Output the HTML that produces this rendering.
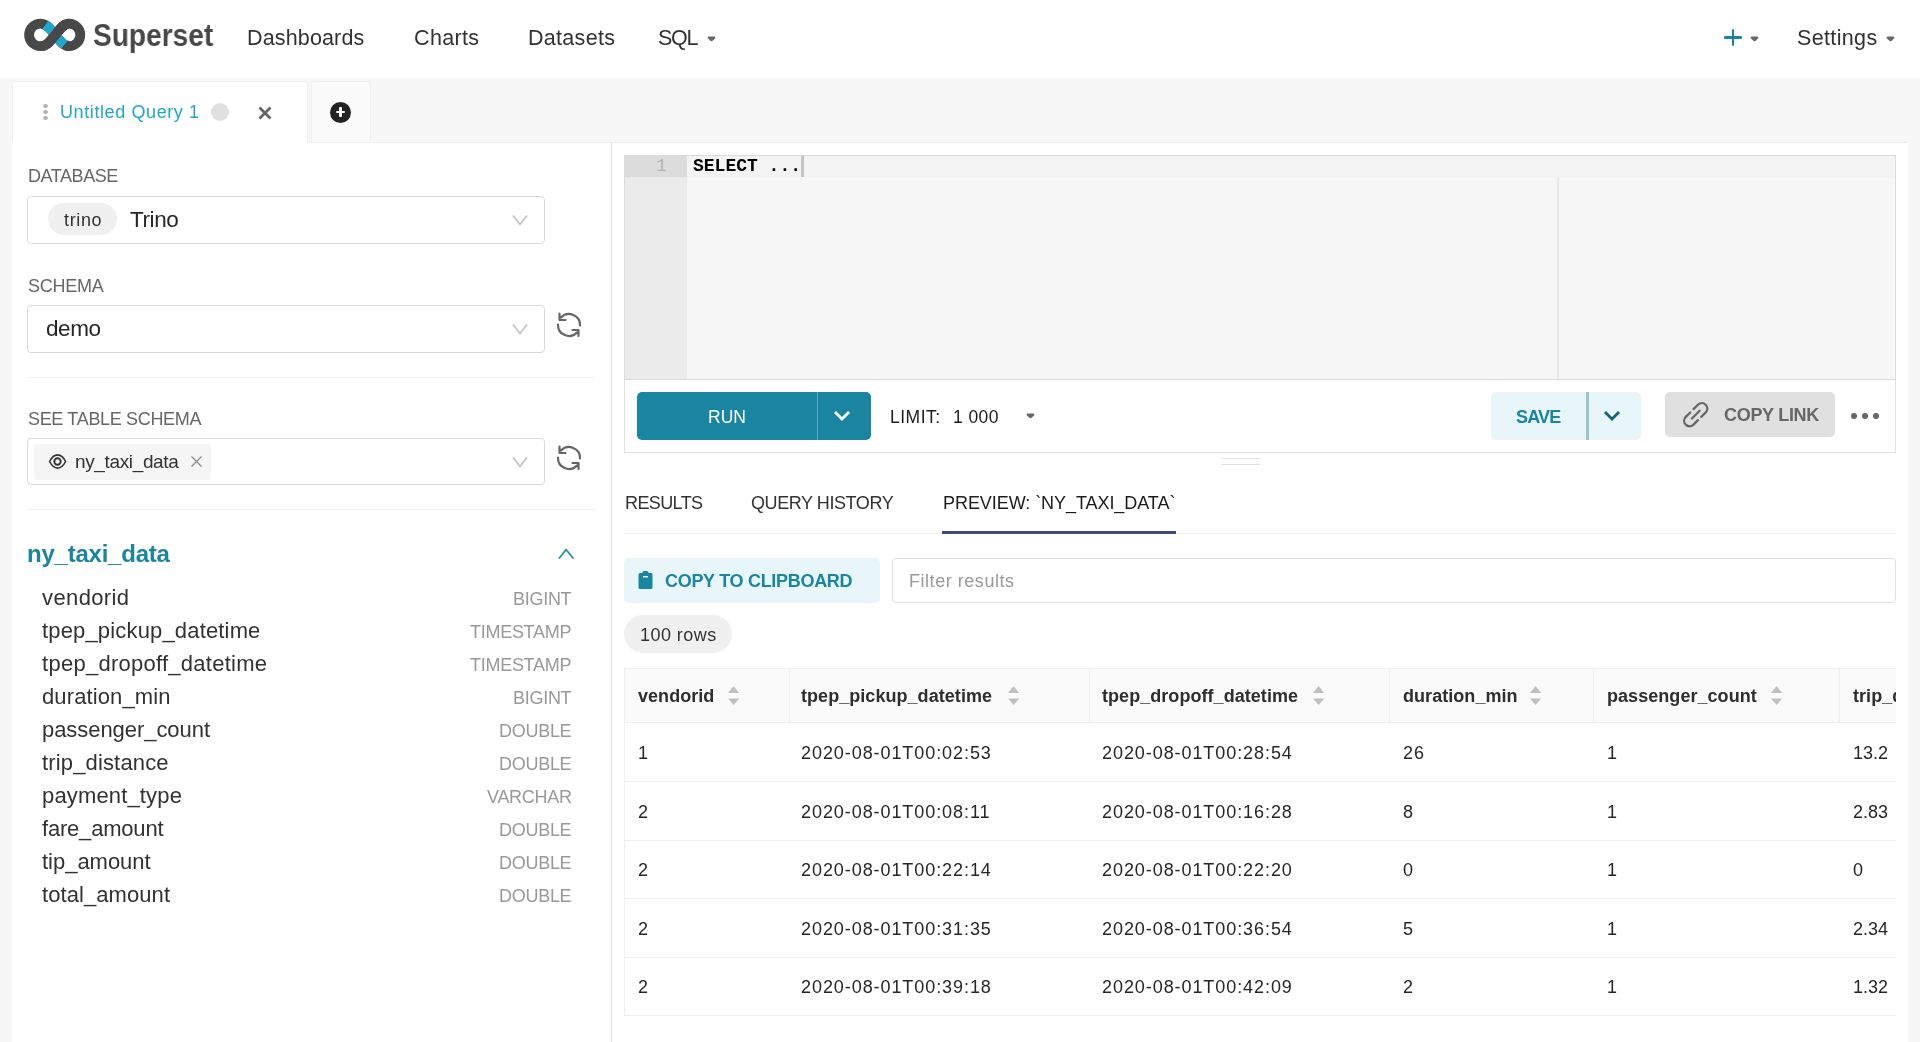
<!DOCTYPE html>
<html><head><meta charset="utf-8">
<style>
*{box-sizing:border-box;margin:0;padding:0}
html,body{width:1920px;height:1042px;overflow:hidden}
body{position:relative;background:#f7f7f7;font-family:"Liberation Sans",sans-serif;color:#323232}
.a{position:absolute}
.t{position:absolute;white-space:pre;line-height:1;will-change:transform}
svg{position:absolute;overflow:visible}
</style></head><body>

<!-- HEADER -->
<div class="a" style="left:0;top:0;width:1920px;height:78px;background:#fff"></div>
<svg style="left:0;top:0" width="220" height="78" viewBox="0 0 220 78">
  <defs><clipPath id="bc"><polygon points="48.5,19.9 69.3,39.5 60.9,49.6 40.8,30"/></clipPath></defs>
  <path d="M55.2,35 C50.2,41 47,46.2 40.4,46.2 A11.3 11.3 0 0 1 40.4 23.6 C47,23.6 50.2,29 55.2,35 C60.2,41 63.4,46.2 69,46.2 A11.3 11.3 0 0 0 69 23.6 C63.4,23.6 60.2,29 55.2,35" fill="none" stroke="#484848" stroke-width="9.8"/>
  <path d="M40.4,23.6 C47,23.6 50.2,29 55.2,35 C60.2,41 63.4,46.2 69,46.2" fill="none" stroke="#20a7c9" stroke-width="9.8" clip-path="url(#bc)"/>
  <path d="M40.4,46.2 C47,46.2 50.2,41 55.2,35 C60.2,29 63.4,23.6 69,23.6" fill="none" stroke="#484848" stroke-width="9.8"/>
  <path d="M41.6,29.1 L47.1,22 M62.6,47.6 L68.3,40.7" stroke="#3d3535" stroke-width="0.8"/>
</svg>
<div class="t" style="left:93px;top:20px;font-size:31px;font-weight:700;color:#484848;transform:scaleX(0.907);transform-origin:0 0">Superset</div>
<div class="t" style="left:247px;top:28px;font-size:21.5px;letter-spacing:0.15px;color:#323232">Dashboards</div>
<div class="t" style="left:414px;top:28px;font-size:21.5px;letter-spacing:0.35px;color:#323232">Charts</div>
<div class="t" style="left:528px;top:28px;font-size:21.5px;letter-spacing:0.3px;color:#323232">Datasets</div>
<div class="t" style="left:658px;top:28px;font-size:21.5px;letter-spacing:-1.3px;color:#323232">SQL</div>
<svg style="left:706.5px;top:35.5px" width="9" height="7" viewBox="0 0 9 7"><path d="M1.8 0.6 H7.2 Q8 0.6 8.5 2 L5.3 5 Q4.5 5.7 3.7 5 L0.5 2 Q1 0.6 1.8 0.6 Z" fill="#666"/></svg>
<!-- plus -->
<div class="a" style="left:1724px;top:36.2px;width:17.5px;height:2.5px;background:#1a85a0;border-radius:1.2px"></div>
<div class="a" style="left:1731.5px;top:29px;width:2.5px;height:17px;background:#1a85a0;border-radius:1.2px"></div>
<svg style="left:1749.5px;top:35.5px" width="9" height="7" viewBox="0 0 9 7"><path d="M1.8 0.6 H7.2 Q8 0.6 8.5 2 L5.3 5 Q4.5 5.7 3.7 5 L0.5 2 Q1 0.6 1.8 0.6 Z" fill="#666"/></svg>
<div class="t" style="left:1797px;top:28px;font-size:21.5px;letter-spacing:0.35px;color:#323232">Settings</div>
<svg style="left:1885.5px;top:35.5px" width="9" height="7" viewBox="0 0 9 7"><path d="M1.8 0.6 H7.2 Q8 0.6 8.5 2 L5.3 5 Q4.5 5.7 3.7 5 L0.5 2 Q1 0.6 1.8 0.6 Z" fill="#666"/></svg>

<!-- TAB BAR -->
<div class="a" style="left:12px;top:142px;width:1896px;height:1px;background:#f0f0f0"></div>
<div class="a" style="left:12px;top:81px;width:296px;height:62px;background:#fff;border:1px solid #f0f0f0;border-bottom:none;border-radius:3px 3px 0 0"></div>
<div class="a" style="left:311px;top:81px;width:60px;height:61px;background:#fafafa;border:1px solid #f0f0f0;border-bottom:none;border-radius:3px 3px 0 0"></div>
<div class="a" style="left:43px;top:104px;width:5px;height:4px;border-radius:50%;background:#b2b2b2"></div>
<div class="a" style="left:43px;top:110px;width:5px;height:4px;border-radius:50%;background:#b2b2b2"></div>
<div class="a" style="left:43px;top:116px;width:5px;height:4px;border-radius:50%;background:#b2b2b2"></div>
<div class="t" style="left:59.5px;top:103px;font-size:18px;letter-spacing:0.6px;color:#20a7c9">Untitled Query 1</div>
<div class="a" style="left:211px;top:103px;width:18px;height:18px;border-radius:50%;background:#e0e0e0"></div>
<svg style="left:258px;top:105.5px" width="14" height="14" viewBox="0 0 14 14"><path d="M1.5 1.5 L12.5 12.5 M12.5 1.5 L1.5 12.5" stroke="#666" stroke-width="2.8" stroke-linecap="butt"/></svg>
<div class="a" style="left:329.9px;top:101.5px;width:21.2px;height:21.2px;border-radius:50%;background:#222"></div>
<div class="a" style="left:335.8px;top:111px;width:9.4px;height:2.2px;background:#fff;border-radius:1px"></div>
<div class="a" style="left:339.4px;top:107.4px;width:2.2px;height:9.4px;background:#fff;border-radius:1px"></div>

<!-- PANELS -->
<div class="a" style="left:12px;top:143px;width:1896px;height:899px;background:#fff"></div>
<div class="a" style="left:611px;top:143px;width:1px;height:899px;background:#e0e0e0"></div>

<!-- LEFT PANEL -->
<div class="t" style="left:27.5px;top:167px;font-size:18px;letter-spacing:-0.43px;color:#666">DATABASE</div>
<div class="a" style="left:27px;top:196px;width:518px;height:48px;border:1px solid #d9d9d9;border-radius:4px"></div>
<div class="a" style="left:48px;top:203px;width:69px;height:32px;border-radius:16px;background:#f0f0f0"></div>
<div class="t" style="left:63.5px;top:211px;font-size:18px;letter-spacing:0.65px;color:#323232">trino</div>
<div class="t" style="left:130px;top:209px;font-size:22.5px;letter-spacing:-0.4px;color:#262626">Trino</div>
<svg style="left:512px;top:214px" width="16" height="12" viewBox="0 0 16 12"><path d="M1 1.5 L8 10.5 L15 1.5" fill="none" stroke="#bfbfbf" stroke-width="1.5"/></svg>

<div class="t" style="left:27.5px;top:277px;font-size:18px;letter-spacing:-0.25px;color:#666">SCHEMA</div>
<div class="a" style="left:27px;top:305px;width:518px;height:48px;border:1px solid #d9d9d9;border-radius:4px"></div>
<div class="t" style="left:45.5px;top:317.5px;font-size:22.5px;letter-spacing:-0.4px;color:#262626">demo</div>
<svg style="left:512px;top:323px" width="16" height="12" viewBox="0 0 16 12"><path d="M1 1.5 L8 10.5 L15 1.5" fill="none" stroke="#bfbfbf" stroke-width="1.5"/></svg>
<svg style="left:0;top:0" width="1" height="1" viewBox="0 0 1 1"></svg>
<svg style="left:550px;top:305px" width="40" height="40" viewBox="550 305 40 40"><path d="M580 325.5 A11 11 0 0 0 561 317.5 M559.5 313.5 V320 H565.5 M558 324.5 A11 11 0 0 0 577 332.5 M572.5 330 H578.5 V336" fill="none" stroke="#666" stroke-width="2.2" stroke-linecap="round" stroke-linejoin="round"/></svg>

<div class="a" style="left:27px;top:377px;width:568px;height:1px;background:#f0f0f0"></div>

<div class="t" style="left:27.5px;top:410px;font-size:18px;letter-spacing:-0.33px;color:#666">SEE TABLE SCHEMA</div>
<div class="a" style="left:27px;top:438px;width:518px;height:47px;border:1px solid #d9d9d9;border-radius:4px"></div>
<div class="a" style="left:34px;top:444px;width:177px;height:36px;border-radius:3px;background:#f5f5f5"></div>
<svg style="left:48px;top:453px" width="20" height="17" viewBox="0 0 20 17"><path d="M1.6 8.5 C4 3.8 6.8 1.9 9.6 1.9 C12.4 1.9 15.2 3.8 17.6 8.5 C15.2 13.2 12.4 15.1 9.6 15.1 C6.8 15.1 4 13.2 1.6 8.5 Z" fill="none" stroke="#323232" stroke-width="1.6" stroke-linejoin="round"/><circle cx="9.5" cy="8.5" r="3.2" fill="none" stroke="#323232" stroke-width="1.9"/></svg>
<div class="t" style="left:74.5px;top:452px;font-size:19px;letter-spacing:-0.36px;color:#323232">ny_taxi_data</div>
<svg style="left:190px;top:455px" width="13" height="13" viewBox="0 0 13 13"><path d="M1.5 1.5 L11.5 11.5 M11.5 1.5 L1.5 11.5" stroke="#8c8c8c" stroke-width="1.3"/></svg>
<svg style="left:512px;top:456px" width="16" height="12" viewBox="0 0 16 12"><path d="M1 1.5 L8 10.5 L15 1.5" fill="none" stroke="#bfbfbf" stroke-width="1.5"/></svg>
<svg style="left:550px;top:438px" width="40" height="40" viewBox="550 305 40 40"><path d="M580 325.5 A11 11 0 0 0 561 317.5 M559.5 313.5 V320 H565.5 M558 324.5 A11 11 0 0 0 577 332.5 M572.5 330 H578.5 V336" fill="none" stroke="#666" stroke-width="2.2" stroke-linecap="round" stroke-linejoin="round"/></svg>

<div class="a" style="left:27px;top:509px;width:568px;height:1px;background:#f0f0f0"></div>

<div class="t" style="left:27px;top:542px;font-size:24px;font-weight:700;letter-spacing:-0.23px;color:#1a85a0">ny_taxi_data</div>
<svg style="left:557px;top:546px" width="18" height="14" viewBox="0 0 18 14"><path d="M2.4 12 L9.1 3.6 L16 12" fill="none" stroke="#2a8ea8" stroke-width="1.7" stroke-linecap="round" stroke-linejoin="round"/></svg>

<div class="t" style="left:42px;top:587px;font-size:22px;letter-spacing:0.386px;color:#323232">vendorid</div>
<div class="t" style="right:1348.5px;top:590px;font-size:18px;letter-spacing:-0.28px;color:#999">BIGINT</div>
<div class="t" style="left:42px;top:620px;font-size:22px;letter-spacing:0.163px;color:#323232">tpep_pickup_datetime</div>
<div class="t" style="right:1348.5px;top:623px;font-size:18px;letter-spacing:-0.28px;color:#999">TIMESTAMP</div>
<div class="t" style="left:42px;top:653px;font-size:22px;letter-spacing:0.265px;color:#323232">tpep_dropoff_datetime</div>
<div class="t" style="right:1348.5px;top:656px;font-size:18px;letter-spacing:-0.28px;color:#999">TIMESTAMP</div>
<div class="t" style="left:42px;top:686px;font-size:22px;letter-spacing:0.118px;color:#323232">duration_min</div>
<div class="t" style="right:1348.5px;top:689px;font-size:18px;letter-spacing:-0.28px;color:#999">BIGINT</div>
<div class="t" style="left:42px;top:719px;font-size:22px;letter-spacing:-0.057px;color:#323232">passenger_count</div>
<div class="t" style="right:1348.5px;top:722px;font-size:18px;letter-spacing:-0.28px;color:#999">DOUBLE</div>
<div class="t" style="left:42px;top:752px;font-size:22px;letter-spacing:0.15px;color:#323232">trip_distance</div>
<div class="t" style="right:1348.5px;top:755px;font-size:18px;letter-spacing:-0.28px;color:#999">DOUBLE</div>
<div class="t" style="left:42px;top:785px;font-size:22px;letter-spacing:0.155px;color:#323232">payment_type</div>
<div class="t" style="right:1348.5px;top:788px;font-size:18px;letter-spacing:-0.28px;color:#999">VARCHAR</div>
<div class="t" style="left:42px;top:818px;font-size:22px;letter-spacing:-0.2px;color:#323232">fare_amount</div>
<div class="t" style="right:1348.5px;top:821px;font-size:18px;letter-spacing:-0.28px;color:#999">DOUBLE</div>
<div class="t" style="left:42px;top:851px;font-size:22px;letter-spacing:-0.022px;color:#323232">tip_amount</div>
<div class="t" style="right:1348.5px;top:854px;font-size:18px;letter-spacing:-0.28px;color:#999">DOUBLE</div>
<div class="t" style="left:42px;top:884px;font-size:22px;letter-spacing:0.073px;color:#323232">total_amount</div>
<div class="t" style="right:1348.5px;top:887px;font-size:18px;letter-spacing:-0.28px;color:#999">DOUBLE</div>

<!-- RIGHT: EDITOR -->
<div class="a" style="left:624px;top:155px;width:1272px;height:225px;background:#f6f6f6;border:1px solid #dcdcdc;border-bottom:1px solid #dcdcdc"></div>
<div class="a" style="left:625px;top:156px;width:62px;height:223px;background:#ebebeb"></div>
<div class="a" style="left:625px;top:156px;width:62px;height:21px;background:#dcdcdc"></div>
<div class="a" style="left:687px;top:156px;width:1207px;height:21px;background:#f3f3f3"></div>
<div class="a" style="left:1557px;top:177px;width:2px;height:202px;background:#e8e8e8"></div>
<div class="t" style="left:656px;top:157px;font-family:'Liberation Mono',monospace;font-size:18px;color:#b2b2b2">1</div>
<div class="t" style="left:693px;top:157px;font-family:'Liberation Mono',monospace;font-size:18px;font-weight:700;color:#000">SELECT ...</div>
<div class="a" style="left:801px;top:156px;width:2.5px;height:21px;background:#c4c4c4"></div>

<!-- TOOLBAR -->
<div class="a" style="left:624px;top:380px;width:1272px;height:73px;border:1px solid #e0e0e0;border-top:none"></div>
<div class="a" style="left:637px;top:392px;width:234px;height:48px;background:#1a85a0;border-radius:5px"></div>
<div class="a" style="left:817px;top:392px;width:1px;height:48px;background:#5aa7bb"></div>
<div class="t" style="left:707.5px;top:409px;font-size:17.5px;color:#fff">RUN</div>
<svg style="left:833px;top:410px" width="18" height="12" viewBox="0 0 18 12"><path d="M2 2 L9 9 L16 2" fill="none" stroke="#fff" stroke-width="2.8"/></svg>
<div class="t" style="left:889.5px;top:409px;font-size:17.5px;letter-spacing:0.5px;color:#1b1b1b">LIMIT:</div>
<div class="t" style="left:952.5px;top:409px;font-size:17.5px;letter-spacing:0.4px;color:#1b1b1b">1 000</div>
<svg style="left:1026px;top:412.8px" width="9" height="7" viewBox="0 0 9 7"><path d="M1.8 0.6 H7.2 Q8 0.6 8.5 2 L5.3 5 Q4.5 5.7 3.7 5 L0.5 2 Q1 0.6 1.8 0.6 Z" fill="#666"/></svg>

<div class="a" style="left:1491px;top:392px;width:150px;height:48px;background:#e9f6f9;border-radius:5px"></div>
<div class="a" style="left:1586px;top:392px;width:3px;height:48px;background:#9cc2ca"></div>
<div class="t" style="left:1516px;top:408px;font-size:18px;font-weight:700;letter-spacing:-0.8px;color:#1a85a0">SAVE</div>
<svg style="left:1603px;top:410px" width="18" height="12" viewBox="0 0 18 12"><path d="M2 2 L9 9 L16 2" fill="none" stroke="#156378" stroke-width="2.8"/></svg>

<div class="a" style="left:1665px;top:392px;width:170px;height:45px;background:#e0e0e0;border-radius:5px"></div>
<svg style="left:1678px;top:398px" width="36" height="34" viewBox="1678 398 36 34"><path d="M1693.55,409.15 L1698.15,404.55 A5.45,5.45 0 0 1 1705.85,412.25 L1701.25,416.85 M1697.95,420.15 L1693.25,424.85 A5.45,5.45 0 0 1 1685.55,417.15 L1690.25,412.45 M1691.95,418.45 L1699.6,410.8" fill="none" stroke="#666" stroke-width="2.3" stroke-linecap="round"/></svg>
<div class="t" style="left:1724px;top:406px;font-size:18px;font-weight:700;letter-spacing:-0.3px;color:#666">COPY LINK</div>
<div class="a" style="left:1851px;top:412.5px;width:6px;height:6px;border-radius:50%;background:#666"></div>
<div class="a" style="left:1862px;top:412.5px;width:6px;height:6px;border-radius:50%;background:#666"></div>
<div class="a" style="left:1872.5px;top:412.5px;width:6px;height:6px;border-radius:50%;background:#666"></div>

<div class="a" style="left:1222px;top:458px;width:38px;height:1px;background:#e0e0e0"></div>
<div class="a" style="left:1222px;top:464px;width:38px;height:1px;background:#e0e0e0"></div>

<!-- RESULT TABS -->
<div class="t" style="left:624.5px;top:494px;font-size:18px;letter-spacing:-0.6px;color:#323232">RESULTS</div>
<div class="t" style="left:751px;top:494px;font-size:18px;letter-spacing:-0.42px;color:#323232">QUERY HISTORY</div>
<div class="t" style="left:943px;top:494px;font-size:18px;letter-spacing:-0.06px;color:#1b1b1b">PREVIEW: `NY_TAXI_DATA`</div>
<div class="a" style="left:624px;top:533px;width:1272px;height:1px;background:#f0f0f0"></div>
<div class="a" style="left:942px;top:531px;width:234px;height:3px;background:#3f4a7c"></div>

<div class="a" style="left:624px;top:558px;width:256px;height:45px;background:#e9f6f9;border-radius:5px"></div>
<svg style="left:638px;top:570px" width="15" height="20" viewBox="0 0 15 20"><path d="M4.5 2.5 Q4.5 1 6 1 H9 Q10.5 1 10.5 2.5 V3 H13 Q14.5 3 14.5 4.5 V17.5 Q14.5 19 13 19 H2 Q0.5 19 0.5 17.5 V4.5 Q0.5 3 2 3 H4.5 Z" fill="#1a85a0"/><rect x="5" y="6" width="5" height="1.5" fill="#e9f6f9"/></svg>
<div class="t" style="left:665px;top:572px;font-size:18px;font-weight:700;letter-spacing:-0.3px;color:#1a85a0">COPY TO CLIPBOARD</div>
<div class="a" style="left:892px;top:558px;width:1004px;height:45px;border:1px solid #dfdfdf;border-radius:4px"></div>
<div class="t" style="left:908.5px;top:572px;font-size:18px;letter-spacing:0.54px;color:#999">Filter results</div>
<div class="a" style="left:624px;top:615px;width:108px;height:38px;border-radius:19px;background:#f0f0f0"></div>
<div class="t" style="left:639.5px;top:626px;font-size:18px;letter-spacing:0.45px;color:#323232">100 rows</div>

<div class="a" style="left:0;top:0;width:1896px;height:1042px;overflow:hidden"><div class="a" style="left:624px;top:668px;width:1272px;height:55px;background:#fafafa;border-top:1px solid #f0f0f0;border-left:1px solid #f0f0f0;border-bottom:1px solid #f0f0f0"></div>
<div class="a" style="left:788.5px;top:669px;width:1px;height:53px;background:#f0f0f0"></div>
<div class="a" style="left:1088.5px;top:669px;width:1px;height:53px;background:#f0f0f0"></div>
<div class="a" style="left:1389px;top:669px;width:1px;height:53px;background:#f0f0f0"></div>
<div class="a" style="left:1593px;top:669px;width:1px;height:53px;background:#f0f0f0"></div>
<div class="a" style="left:1839px;top:669px;width:1px;height:53px;background:#f0f0f0"></div>
<div class="t" style="left:638px;top:687px;font-size:18px;font-weight:700;letter-spacing:0.05px;color:#2e2e2e">vendorid</div>
<svg style="left:727.9px;top:685.7px" width="12" height="19" viewBox="0 0 12 19"><path d="M5.6 0 L11.2 7 H0 Z M5.6 19 L11.2 12.4 H0 Z" fill="#bfbfbf"/></svg>
<div class="t" style="left:801px;top:687px;font-size:18px;font-weight:700;letter-spacing:0.05px;color:#2e2e2e">tpep_pickup_datetime</div>
<svg style="left:1007.9px;top:685.7px" width="12" height="19" viewBox="0 0 12 19"><path d="M5.6 0 L11.2 7 H0 Z M5.6 19 L11.2 12.4 H0 Z" fill="#bfbfbf"/></svg>
<div class="t" style="left:1101.5px;top:687px;font-size:18px;font-weight:700;letter-spacing:0.05px;color:#2e2e2e">tpep_dropoff_datetime</div>
<svg style="left:1312.9px;top:685.7px" width="12" height="19" viewBox="0 0 12 19"><path d="M5.6 0 L11.2 7 H0 Z M5.6 19 L11.2 12.4 H0 Z" fill="#bfbfbf"/></svg>
<div class="t" style="left:1402.5px;top:687px;font-size:18px;font-weight:700;letter-spacing:0.05px;color:#2e2e2e">duration_min</div>
<svg style="left:1529.9px;top:685.7px" width="12" height="19" viewBox="0 0 12 19"><path d="M5.6 0 L11.2 7 H0 Z M5.6 19 L11.2 12.4 H0 Z" fill="#bfbfbf"/></svg>
<div class="t" style="left:1606.5px;top:687px;font-size:18px;font-weight:700;letter-spacing:0.05px;color:#2e2e2e">passenger_count</div>
<svg style="left:1771.4px;top:685.7px" width="12" height="19" viewBox="0 0 12 19"><path d="M5.6 0 L11.2 7 H0 Z M5.6 19 L11.2 12.4 H0 Z" fill="#bfbfbf"/></svg>
<div class="t" style="left:1852.5px;top:687px;font-size:18px;font-weight:700;letter-spacing:0.05px;color:#2e2e2e">trip_distance</div>
<div class="a" style="left:624px;top:723.0px;width:1px;height:59px;background:#f0f0f0"></div>
<div class="a" style="left:624px;top:781.0px;width:1272px;height:1px;background:#f0f0f0"></div>
<div class="t" style="left:638px;top:744.0px;font-size:18px;letter-spacing:0.93px;color:#262626">1</div>
<div class="t" style="left:801px;top:744.0px;font-size:18px;letter-spacing:0.93px;color:#262626">2020-08-01T00:02:53</div>
<div class="t" style="left:1101.5px;top:744.0px;font-size:18px;letter-spacing:0.93px;color:#262626">2020-08-01T00:28:54</div>
<div class="t" style="left:1402.5px;top:744.0px;font-size:18px;letter-spacing:0.93px;color:#262626">26</div>
<div class="t" style="left:1606.5px;top:744.0px;font-size:18px;letter-spacing:0.93px;color:#262626">1</div>
<div class="t" style="left:1852.5px;top:744.0px;font-size:18px;letter-spacing:0px;color:#262626">13.2</div>
<div class="a" style="left:624px;top:781.5px;width:1px;height:59px;background:#f0f0f0"></div>
<div class="a" style="left:624px;top:839.5px;width:1272px;height:1px;background:#f0f0f0"></div>
<div class="t" style="left:638px;top:802.5px;font-size:18px;letter-spacing:0.93px;color:#262626">2</div>
<div class="t" style="left:801px;top:802.5px;font-size:18px;letter-spacing:0.93px;color:#262626">2020-08-01T00:08:11</div>
<div class="t" style="left:1101.5px;top:802.5px;font-size:18px;letter-spacing:0.93px;color:#262626">2020-08-01T00:16:28</div>
<div class="t" style="left:1402.5px;top:802.5px;font-size:18px;letter-spacing:0.93px;color:#262626">8</div>
<div class="t" style="left:1606.5px;top:802.5px;font-size:18px;letter-spacing:0.93px;color:#262626">1</div>
<div class="t" style="left:1852.5px;top:802.5px;font-size:18px;letter-spacing:0px;color:#262626">2.83</div>
<div class="a" style="left:624px;top:840.0px;width:1px;height:59px;background:#f0f0f0"></div>
<div class="a" style="left:624px;top:898.0px;width:1272px;height:1px;background:#f0f0f0"></div>
<div class="t" style="left:638px;top:861.0px;font-size:18px;letter-spacing:0.93px;color:#262626">2</div>
<div class="t" style="left:801px;top:861.0px;font-size:18px;letter-spacing:0.93px;color:#262626">2020-08-01T00:22:14</div>
<div class="t" style="left:1101.5px;top:861.0px;font-size:18px;letter-spacing:0.93px;color:#262626">2020-08-01T00:22:20</div>
<div class="t" style="left:1402.5px;top:861.0px;font-size:18px;letter-spacing:0.93px;color:#262626">0</div>
<div class="t" style="left:1606.5px;top:861.0px;font-size:18px;letter-spacing:0.93px;color:#262626">1</div>
<div class="t" style="left:1852.5px;top:861.0px;font-size:18px;letter-spacing:0px;color:#262626">0</div>
<div class="a" style="left:624px;top:898.5px;width:1px;height:59px;background:#f0f0f0"></div>
<div class="a" style="left:624px;top:956.5px;width:1272px;height:1px;background:#f0f0f0"></div>
<div class="t" style="left:638px;top:919.5px;font-size:18px;letter-spacing:0.93px;color:#262626">2</div>
<div class="t" style="left:801px;top:919.5px;font-size:18px;letter-spacing:0.93px;color:#262626">2020-08-01T00:31:35</div>
<div class="t" style="left:1101.5px;top:919.5px;font-size:18px;letter-spacing:0.93px;color:#262626">2020-08-01T00:36:54</div>
<div class="t" style="left:1402.5px;top:919.5px;font-size:18px;letter-spacing:0.93px;color:#262626">5</div>
<div class="t" style="left:1606.5px;top:919.5px;font-size:18px;letter-spacing:0.93px;color:#262626">1</div>
<div class="t" style="left:1852.5px;top:919.5px;font-size:18px;letter-spacing:0px;color:#262626">2.34</div>
<div class="a" style="left:624px;top:957.0px;width:1px;height:59px;background:#f0f0f0"></div>
<div class="a" style="left:624px;top:1015.0px;width:1272px;height:1px;background:#f0f0f0"></div>
<div class="t" style="left:638px;top:978.0px;font-size:18px;letter-spacing:0.93px;color:#262626">2</div>
<div class="t" style="left:801px;top:978.0px;font-size:18px;letter-spacing:0.93px;color:#262626">2020-08-01T00:39:18</div>
<div class="t" style="left:1101.5px;top:978.0px;font-size:18px;letter-spacing:0.93px;color:#262626">2020-08-01T00:42:09</div>
<div class="t" style="left:1402.5px;top:978.0px;font-size:18px;letter-spacing:0.93px;color:#262626">2</div>
<div class="t" style="left:1606.5px;top:978.0px;font-size:18px;letter-spacing:0.93px;color:#262626">1</div>
<div class="t" style="left:1852.5px;top:978.0px;font-size:18px;letter-spacing:0px;color:#262626">1.32</div></div>

</body></html>
